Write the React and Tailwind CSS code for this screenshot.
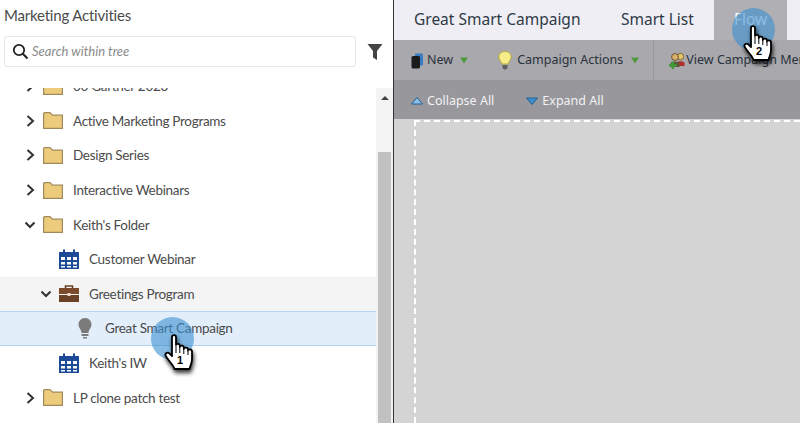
const sans = "font-['Noto_Sans',sans-serif]";

const Chevron = ({ open }) => (
  <svg width="10" height="12" viewBox="0 0 10 12" className="shrink-0">
    {open ? (
      <path d="M0.5 3.5 L5 8 L9.5 3.5" fill="none" stroke="#333" strokeWidth="2" />
    ) : (
      <path d="M2.5 1 L8 6 L2.5 11" fill="none" stroke="#333" strokeWidth="2" />
    )}
  </svg>
);

const Folder = () => (
  <svg width="20" height="17" viewBox="0 0 20 17" className="shrink-0">
    <path d="M0.6 16.4 V1.6 Q0.6 0.6 1.6 0.6 H7 L9.5 3.2 H19.4 V16.4 Z" fill="#edcb7d" stroke="#a08a58" strokeWidth="1.2" />
  </svg>
);

const CalendarIcon = () => (
  <svg width="20" height="20" viewBox="0 0 20 20" className="shrink-0">
    <path d="M0 3 H20 V20 H0 Z" fill="#1c4a96" />
    <path d="M4 0.5 H6 V4 H4 Z M14 0.5 H16 V4 H14 Z" fill="#1c4a96" />
    <path
      d="M2 8 H6 V11 H2 Z M8 8 H12 V11 H8 Z M14 8 H18 V11 H14 Z M2 13 H6 V15.5 H2 Z M8 13 H12 V15.5 H8 Z M14 13 H18 V15.5 H14 Z M2 17 H6 V18.5 H2 Z M8 17 H12 V18.5 H8 Z M14 17 H18 V18.5 H14 Z"
      fill="#fff"
    />
  </svg>
);

const Briefcase = () => (
  <svg width="20" height="17" viewBox="0 0 20 17" className="shrink-0">
    <path d="M6.5 3 V1 H13.5 V3" fill="none" stroke="#6b4226" strokeWidth="1.6" />
    <path d="M0 3 H20 V9 H0 Z" fill="#7a4a2a" />
    <path d="M0 10 H20 V17 H0 Z" fill="#6b4226" />
    <rect x="8.5" y="8" width="3" height="3" fill="#e9dccb" />
  </svg>
);

const Bulb = () => (
  <svg width="14" height="21" viewBox="0 0 14 21" className="shrink-0">
    <path d="M7 0 C3 0 0.5 3 0.5 6.5 C0.5 10 3.5 11.5 3.5 15 H10.5 C10.5 11.5 13.5 10 13.5 6.5 C13.5 3 11 0 7 0 Z" fill="#7b7b7b" />
    <path d="M3.5 16 H10.5 V18 H3.5 Z M5 19 H9 V20.5 H5 Z" fill="#7b7b7b" />
  </svg>
);

const Hand = ({ num }) => (
  <div className="relative w-[31px] h-[38px]">
    <svg width="31" height="38" viewBox="0 0 31 38" className="drop-shadow-[1px_3px_2px_rgba(0,0,0,0.8)]">
      <path
        d="M8 3 C8 0.6 12 0.6 12 3 V11 C12 9.5 15.8 9.5 15.8 11.5 V13 C16 11 19.8 11.2 19.8 13.5 V15 C20 13 24 13.2 24 15.5 V16.5 C24.2 14.8 28 15 28 17.5 V25 C28 29 26.5 31 25.5 35 H10.5 C9.5 31 6 28.5 2 22.5 C0.2 19.8 3 17.5 5.5 19.5 L8 22 Z"
        fill="#fff"
        stroke="#000"
        strokeWidth="1.8"
        strokeLinejoin="round"
      />
      <path d="M12 12 V19 M15.8 13 V19 M19.8 15 V20 M24 17 V21" stroke="#000" strokeWidth="1" />
    </svg>
    <span className="absolute left-[13px] top-[20px] text-[11px] leading-[13px] font-bold text-black font-['Liberation_Sans',sans-serif]">
      {num}
    </span>
  </div>
);

const Click = ({ num, className, handClass }) => (
  <div className={`absolute ${className}`}>
    <div className="w-[43px] h-[43px] rounded-full bg-[#3a90d0]/60" />
    <div className={`absolute ${handClass}`}>
      <Hand num={num} />
    </div>
  </div>
);

const Row = ({ indent, chevron, icon, iconWidth = 30, label, className = "" }) => (
  <div className={`h-[34.6px] flex items-center shrink-0 ${className}`} style={{ paddingLeft: indent }}>
    <div className="w-[18px] flex justify-start">{chevron}</div>
    <div className="flex justify-start" style={{ width: iconWidth }}>{icon}</div>
    <span className="text-[13.5px] tracking-[-0.3px] text-[#4b4b4b] whitespace-nowrap">{label}</span>
  </div>
);

const Tree = () => (
  <div className="flex-1 min-h-0 flex overflow-hidden">
    <div className="w-[376px] flex flex-col -mt-[19px]">
      <Row indent={25} chevron={<Chevron />} icon={<Folder />} label="00 Gartner 2023" />
      <Row indent={25} chevron={<Chevron />} icon={<Folder />} label="Active Marketing Programs" />
      <Row indent={25} chevron={<Chevron />} icon={<Folder />} label="Design Series" />
      <Row indent={25} chevron={<Chevron />} icon={<Folder />} label="Interactive Webinars" />
      <Row indent={25} chevron={<Chevron open />} icon={<Folder />} label="Keith's Folder" />
      <Row indent={41} chevron={null} icon={<CalendarIcon />} label="Customer Webinar" />
      <Row indent={41} chevron={<Chevron open />} icon={<Briefcase />} label="Greetings Program" className="bg-[#f4f4f4]" />
      <Row
        indent={60}
        chevron={null}
        icon={<Bulb />}
        iconWidth={27}
        label="Great Smart Campaign"
        className="bg-[#e3eefb] border-y border-[#b5d3f2]"
      />
      <Row indent={41} chevron={null} icon={<CalendarIcon />} label="Keith's IW" />
      <Row indent={25} chevron={<Chevron />} icon={<Folder />} label="LP clone patch test" />
    </div>
    <div className="w-[17px] bg-[#f3f3f3] flex flex-col items-center">
      <div className="h-[64px] w-full flex justify-center pt-[8px]">
        <div className="w-0 h-0 border-x-[4px] border-x-transparent border-b-[4px] border-b-[#444]" />
      </div>
      <div className="flex-1 w-[13px] bg-[#c1c1c1]" />
    </div>
  </div>
);

const LeftPanel = () => (
  <div className="w-[393px] h-full flex flex-col bg-white font-['Lato',sans-serif]">
    <div className="h-[30px] pl-[4px] pt-[4px] text-[15px] tracking-[-0.2px] leading-[22px] text-[#4b4b4b]">Marketing Activities</div>
    <div className="h-[58px] flex items-start pt-[6px] pl-[4px]">
      <div className="w-[352px] h-[31px] rounded-[3px] border border-[#e6e6e6] flex items-center pl-[7px] gap-[3px]">
        <svg width="17" height="17" viewBox="0 0 17 17">
          <circle cx="7" cy="7" r="5.2" fill="none" stroke="#222" strokeWidth="1.8" />
          <path d="M10.8 10.8 L15.5 15.5" stroke="#222" strokeWidth="2" />
        </svg>
        <span className="text-[13px] italic text-[#8a8a8a]">Search within tree</span>
      </div>
      <svg width="17" height="18" viewBox="0 0 17 18" className="ml-[11px] mt-[7px]">
        <path d="M0.5 1 H15.5 L10 8 V17 L6 14.5 V8 Z" fill="#444" />
      </svg>
    </div>
    <Tree />
  </div>
);

const Caret = () => (
  <svg width="8" height="7" viewBox="0 0 8 7" className="shrink-0">
    <path d="M0 0.5 H8 L4 6.5 Z" fill="#4f9a3c" />
  </svg>
);

const RightPanel = () => (
  <div className="flex-1 h-full flex flex-col border-l border-[#333] bg-[#d4d4d4] min-w-0">
    <div className="h-[40px] bg-[#eeeef4] flex shrink-0 text-[15.5px] text-[#2e3a46]">
      <div className="pl-[20px] w-[227px] flex items-center whitespace-nowrap">Great Smart Campaign</div>
      <div className="w-[93px] flex items-center whitespace-nowrap">Smart List</div>
      <div className="w-[73px] bg-[#b0afb3] flex items-center pl-[20px] text-white">Flow</div>
    </div>
    <div className="h-[40px] pt-[1px] bg-[#a9a8ac] flex items-center shrink-0 text-[12.5px] text-[#28323c] whitespace-nowrap overflow-hidden">
      <svg width="13" height="16" viewBox="0 0 13 16" className="ml-[17px] shrink-0">
        <rect x="4" y="0.5" width="8" height="12" rx="1" fill="#3a7cc0" />
        <rect x="0.5" y="3" width="8.5" height="12.5" rx="1.5" fill="#1b1b1b" />
      </svg>
      <span className="ml-[3px]">New</span>
      <span className="ml-[7px]"><Caret /></span>
      <svg width="14" height="19" viewBox="0 0 14 19" className="ml-[30px] shrink-0">
        <path d="M7 0.5 C3 0.5 0.8 3 0.8 6 C0.8 9 3.5 10.5 4 13 H10 C10.5 10.5 13.2 9 13.2 6 C13.2 3 11 0.5 7 0.5 Z" fill="#f6ec8a" stroke="#b8a93c" />
        <path d="M4.5 14 H9.5 V17 L8 18.5 H6 L4.5 17 Z" fill="#5f5f5f" />
      </svg>
      <span className="ml-[5px]">Campaign Actions</span>
      <span className="ml-[8px]"><Caret /></span>
      <div className="ml-[14px] w-px h-[40px] bg-[#98979b] shrink-0" />
      <svg width="18" height="18" viewBox="0 0 18 18" className="ml-[14px] shrink-0">
        <circle cx="12.5" cy="4.5" r="3.2" fill="#e5c76b" stroke="#6b5520" strokeWidth="0.8" />
        <path d="M8.5 14 V11 C8.5 8.5 16.5 8.5 16.5 11 V14 Z" fill="#b03030" />
        <circle cx="7" cy="5" r="3.4" fill="#d9b070" stroke="#54401c" strokeWidth="0.8" />
        <path d="M2.5 15 V11.5 C2.5 8.8 11.5 8.8 11.5 11.5 V15 Z" fill="#5a5a3a" />
        <path d="M3.5 9.5 H6 V12 H8.5 V14.5 H6 V17 H3.5 V14.5 H1 V12 H3.5 Z" fill="#3f9b3a" />
      </svg>
      <span>View Campaign Members</span>
    </div>
    <div className="h-[39px] pt-[3px] bg-[#98979b] flex items-center shrink-0 text-[12.5px] text-[#f2f2f4] whitespace-nowrap">
      <svg width="12" height="8" viewBox="0 0 12 8" className="ml-[17px] shrink-0">
        <path d="M6 0.5 L11.5 7 H0.5 Z" fill="#8dbfe4" stroke="#1f5f96" strokeWidth="1" />
      </svg>
      <span className="ml-[4px]">Collapse All</span>
      <svg width="12" height="8" viewBox="0 0 12 8" className="ml-[32px] shrink-0">
        <path d="M0.5 1 H11.5 L6 7.5 Z" fill="#3e8ecb" stroke="#1f5f96" strokeWidth="1" />
      </svg>
      <span className="ml-[4px]">Expand All</span>
    </div>
    <div className="flex-1 min-h-0 pl-[20px] pt-px">
      <div className="h-full border-l-2 border-t-2 border-dashed border-white" />
    </div>
  </div>
);

export default function App() {
  return (
    <div className={`relative w-[800px] h-[423px] overflow-hidden flex ${sans}`}>
      <LeftPanel />
      <RightPanel />
      <Click num="1" className="left-[151px] top-[317px]" handClass="left-[13px] top-[17px]" />
      <Click num="2" className="left-[732px] top-[8px]" handClass="left-[11px] top-[17px]" />
    </div>
  );
}
